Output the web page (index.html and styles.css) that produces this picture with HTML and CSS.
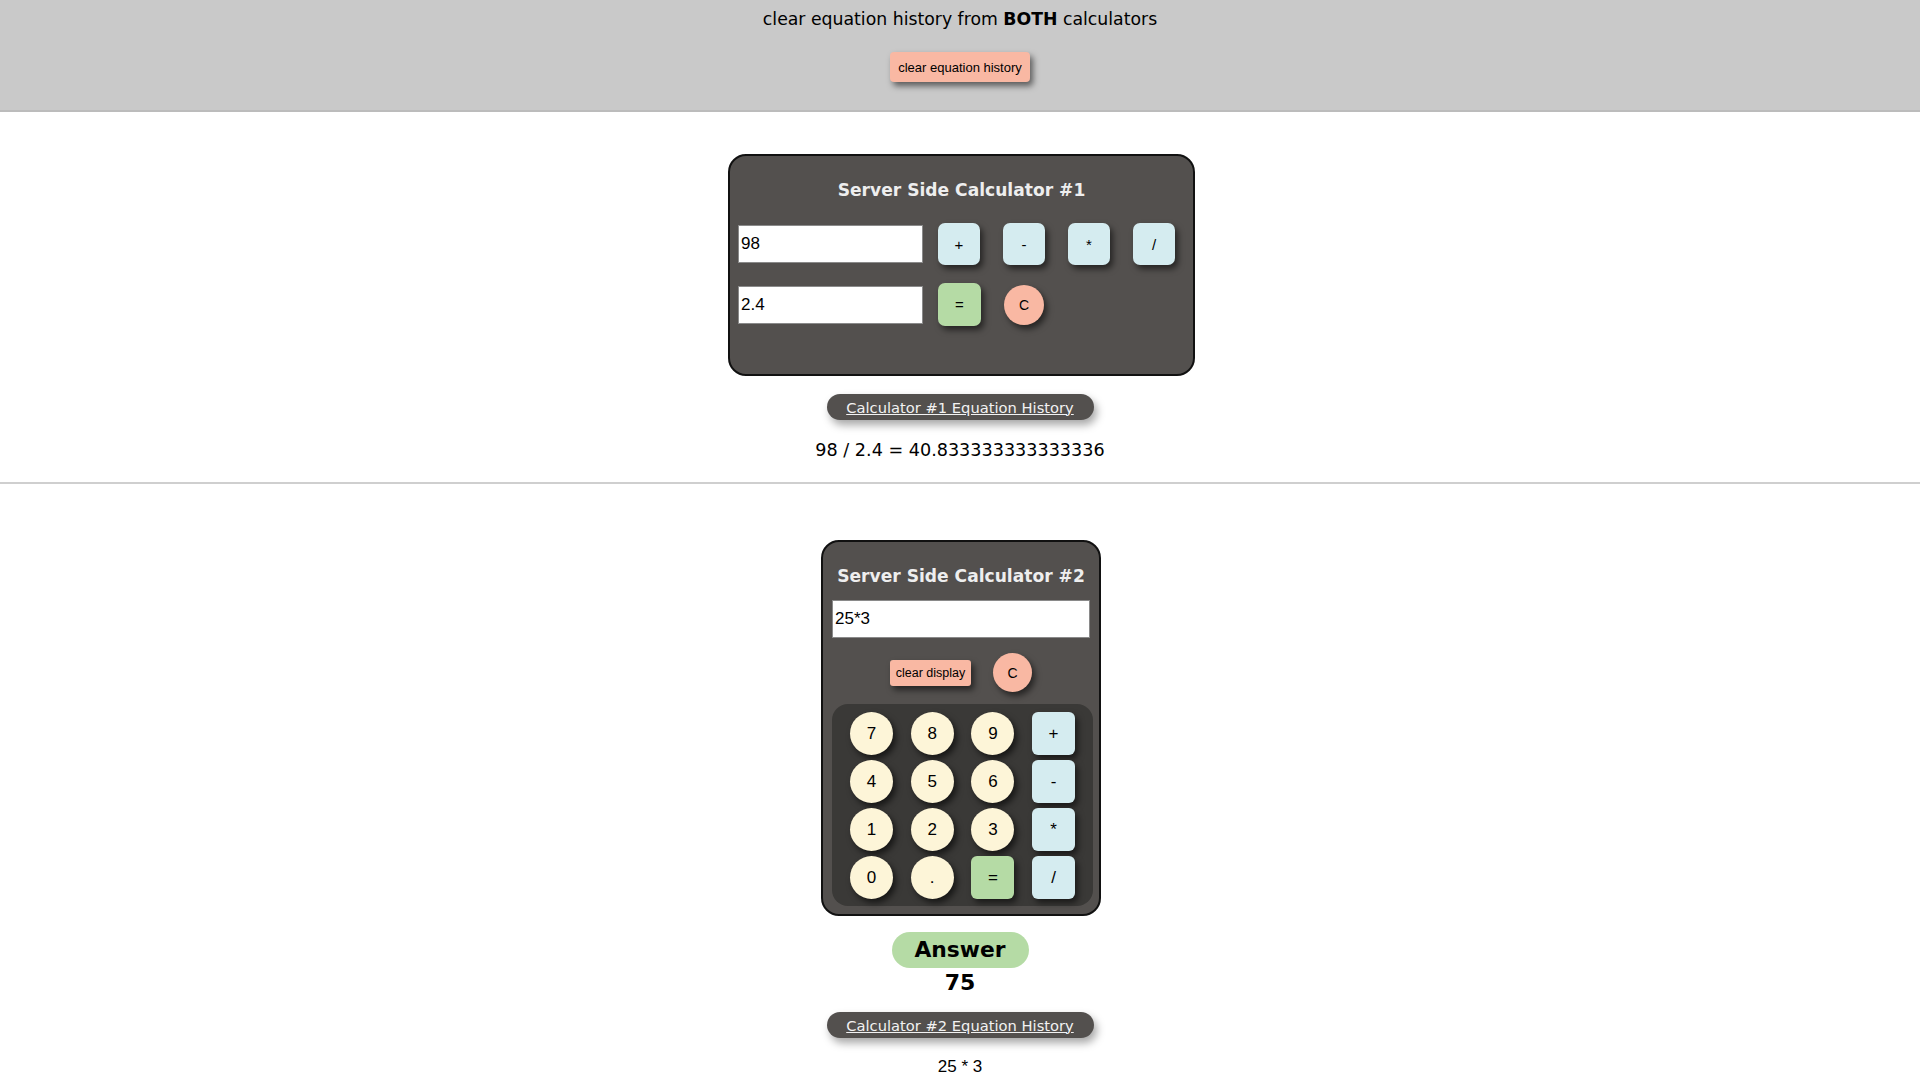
FILE: index.html
```html
<!DOCTYPE html>
<html lang="en">
<head>
<meta charset="utf-8">
<title>Server Side Calculators</title>
<link rel="stylesheet" href="styles.css">
</head>
<body>
<header class="top-bar">
  <p class="top-text">clear equation history from <b>BOTH</b> calculators</p>
  <button class="btn-salmon btn-clear-all">clear equation history</button>
</header>

<section class="section section-one">
  <div class="calc calc-one">
    <h2 class="calc-title">Server Side Calculator #1</h2>
    <div class="calc-row">
      <input class="num-input" type="text" value="98">
      <div class="ops">
        <button class="key-op">+</button>
        <button class="key-op">-</button>
        <button class="key-op">*</button>
        <button class="key-op">/</button>
      </div>
    </div>
    <div class="calc-row">
      <input class="num-input" type="text" value="2.4">
      <div class="ops">
        <button class="key-eq">=</button>
        <button class="key-c">C</button>
      </div>
    </div>
  </div>
  <button class="history-btn"><span>Calculator #1 Equation History</span></button>
  <p class="history-line">98 / 2.4 = 40.833333333333336</p>
</section>

<hr class="divider">

<section class="section section-two">
  <div class="calc calc-two">
    <h2 class="calc-title">Server Side Calculator #2</h2>
    <input class="display-input" type="text" value="25*3">
    <div class="clear-row">
      <button class="btn-salmon btn-clear-display">clear display</button>
      <button class="key-c key-c2">C</button>
    </div>
    <div class="keypad">
      <button class="key-num">7</button>
      <button class="key-num">8</button>
      <button class="key-num">9</button>
      <button class="key-op key-op2">+</button>
      <button class="key-num">4</button>
      <button class="key-num">5</button>
      <button class="key-num">6</button>
      <button class="key-op key-op2">-</button>
      <button class="key-num">1</button>
      <button class="key-num">2</button>
      <button class="key-num">3</button>
      <button class="key-op key-op2">*</button>
      <button class="key-num">0</button>
      <button class="key-num">.</button>
      <button class="key-eq key-eq2">=</button>
      <button class="key-op key-op2">/</button>
    </div>
  </div>
  <div class="answer-pill">Answer</div>
  <div class="answer-value">75</div>
  <button class="history-btn history-btn-two"><span>Calculator #2 Equation History</span></button>
  <p class="history-line history-line-two">25 * 3</p>
</section>
</body>
</html>
```

FILE: styles.css
```css
* { box-sizing: border-box; }

html, body {
  margin: 0;
  padding: 0;
  background: #ffffff;
}

body {
  font-family: "DejaVu Sans", Verdana, sans-serif;
  color: #000;
}

button {
  font-family: "Liberation Sans", Arial, sans-serif;
  border: none;
  padding: 0;
  cursor: pointer;
  color: #000;
}

/* ---------- header ---------- */
.top-bar {
  background: #c9c9c9;
  border-bottom: 2px solid #bcbcbc;
  padding: 9px 0 28px;
  display: flex;
  flex-direction: column;
  align-items: center;
}

.top-text {
  margin: 0 0 22px;
  font-size: 17.3px;
  line-height: 21px;
}

.btn-salmon {
  background: #f9b8a3;
  border-radius: 4px;
  box-shadow: 3px 4px 6px rgba(0, 0, 0, 0.55);
}

.btn-clear-all {
  width: 140px;
  height: 30px;
  font-size: 13px;
}

/* ---------- sections ---------- */
.section {
  display: flex;
  flex-direction: column;
  align-items: center;
}

.section-one { padding-top: 42px; }
.section-two { padding-top: 56px; }

.divider {
  margin: 21px 0 0;
  border: none;
  border-top: 2px solid #cfcfcf;
  height: 0;
}

/* ---------- calculator box ---------- */
.calc {
  background: #53504e;
  border: 2px solid #111;
  border-radius: 18px;
  display: flex;
  flex-direction: column;
}

.calc-title {
  margin: 24px 0 0;
  text-align: center;
  color: #eeeeee;
  font-size: 17.1px;
  line-height: 21px;
  font-weight: bold;
}

.calc-one {
  width: 467px;
  margin-left: 3px;
  padding: 0 0 48px;
}

.calc-row {
  display: flex;
  align-items: center;
  gap: 15px;
  margin-top: 18px;
  padding-left: 8px;
}

.calc-row:first-of-type { margin-top: 22px; }

.num-input {
  width: 185px;
  height: 38px;
  border: 1px solid #8a8a8a;
  background: #fff;
  font-family: "Liberation Sans", Arial, sans-serif;
  font-size: 17px;
  padding: 0 2px;
  color: #000;
}

.ops {
  display: flex;
  align-items: center;
  gap: 23px;
}

.key-op {
  width: 42px;
  height: 42px;
  border-radius: 7px;
  background: #d5ecf0;
  font-size: 15px;
  box-shadow: 3px 4px 6px rgba(0, 0, 0, 0.55);
}

.key-eq {
  width: 43px;
  height: 43px;
  border-radius: 7px;
  background: #b5dba5;
  font-size: 15px;
  box-shadow: 3px 4px 6px rgba(0, 0, 0, 0.55);
}

.key-c {
  width: 40px;
  height: 40px;
  border-radius: 50%;
  background: #f9b8a3;
  font-size: 14px;
  box-shadow: 3px 4px 6px rgba(0, 0, 0, 0.55);
}

/* ---------- history ---------- */
.history-btn {
  margin-top: 18px;
  width: 267px;
  height: 26px;
  border-radius: 13px;
  background: #53504e;
  color: #f2f2f2;
  font-family: "DejaVu Sans", Verdana, sans-serif;
  font-size: 14.7px;
  box-shadow: 3px 5px 8px rgba(0, 0, 0, 0.35);
}

.history-btn span { text-decoration: underline; }

.history-line {
  margin: 19px 0 0;
  font-size: 17.6px;
  line-height: 22px;
}

/* ---------- calculator 2 ---------- */
.calc-two {
  width: 280px;
  margin-left: 2px;
  padding: 0 9px 8px;
}

.calc-two .calc-title { margin-top: 24px; }

.display-input {
  margin-top: 13px;
  width: 100%;
  height: 38px;
  border: 1px solid #8a8a8a;
  background: #fff;
  font-family: "Liberation Sans", Arial, sans-serif;
  font-size: 17px;
  padding: 0 2px;
  color: #000;
}

.clear-row {
  margin-top: 15px;
  display: flex;
  justify-content: center;
  align-items: center;
  gap: 22px;
  height: 39px;
}

.btn-clear-display {
  width: 81px;
  height: 26px;
  font-size: 12.5px;
  border-radius: 3px;
}

.key-c2 {
  width: 39px;
  height: 39px;
}

.keypad {
  margin: 12px auto 0;
  width: 261px;
  background: #3a3937;
  border-radius: 16px;
  padding: 8px 17px 7px 18px;
  display: grid;
  grid-template-columns: repeat(4, 43px);
  grid-auto-rows: 43px;
  column-gap: 17.7px;
  row-gap: 5px;
}

.key-num {
  width: 43px;
  height: 43px;
  border-radius: 50%;
  background: #fdf5d8;
  font-size: 17px;
  box-shadow: 3px 4px 6px rgba(0, 0, 0, 0.6);
}

.key-op2, .key-eq2 {
  width: 43px;
  height: 43px;
  border-radius: 6px;
  font-size: 17px;
}

/* ---------- answer ---------- */
.answer-pill {
  margin-top: 16px;
  width: 137px;
  height: 36px;
  border-radius: 18px;
  background: #b5dba5;
  font-weight: bold;
  font-size: 21.8px;
  line-height: 36px;
  text-align: center;
}

.answer-value {
  font-weight: bold;
  font-size: 22px;
  line-height: 26px;
  margin-top: 2px;
}

.history-btn-two { margin-top: 16px; }

.history-line-two {
  margin-top: 18px;
  font-family: "Liberation Sans", Arial, sans-serif;
  font-size: 17px;
}
```
